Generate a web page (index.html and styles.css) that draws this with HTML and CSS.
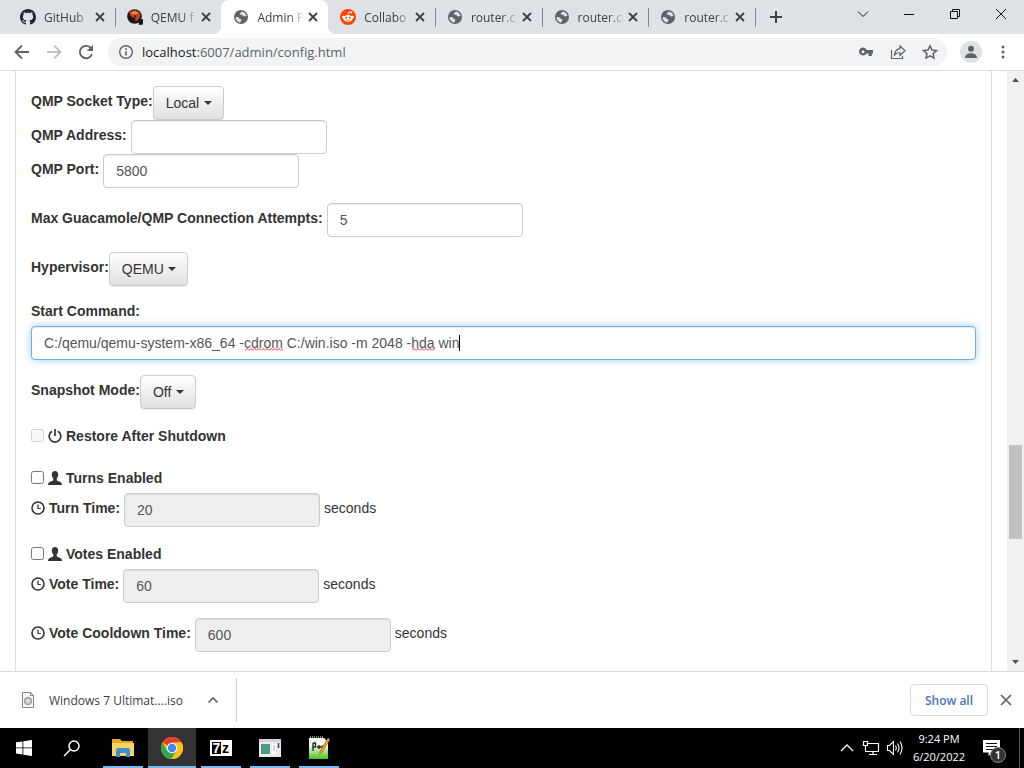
FILE: index.html
```html
<!DOCTYPE html>
<html lang="en">
  <head>
    <title>Admin Panel</title>
    <meta charset="utf-8" />
    <meta name="viewport" content="width=device-width, initial-scale=1" />
    <link rel="stylesheet" href="styles.css">
  </head>
  <body>
    <!-- shared icons -->
    <svg class="defs" aria-hidden="true">
      <symbol id="globe" viewBox="0 0 16 16">
        <circle cx="8" cy="8" r="7" fill="#5f6368"/>
        <path d="M2.600 8.200c1.700-.3 3 .1 3.700 1.100.6.8 1.800.6 2.100 1.500.2.8-.7 1.200-.9 2.700C4.600 13.300 2.500 11 2.600 8.200zM8.600 2.500c-.3 1.300-1.900 1.200-1.900 2.300 0 1 1.300.9 2.300.9.8 0 .6 1.300 1.600 1.600 1.100.3 1.800-.4 2.900-.1C13.200 4.700 11.300 2.700 8.600 2.500z" fill="#dee1e6"/>
      </symbol>
      <symbol id="cross" viewBox="0 0 16 16">
        <path d="M4 4l8 8M12 4l-8 8" stroke="#3c4043" stroke-width="1.800" fill="none"/>
      </symbol>
      <symbol id="clock" viewBox="0 0 14 14">
        <circle cx="7" cy="7" r="6" fill="none" stroke="#333" stroke-width="1.600"/>
        <path d="M7 3.500v4h2.800" fill="none" stroke="#333" stroke-width="1.200"/>
      </symbol>
      <symbol id="user" viewBox="0 0 14 14">
        <path d="M7 0c2 0 3.200 1.400 3.200 3.500 0 1.700-.6 3.200-1.500 4v1.300c0 .8.900 1 2.400 1.600 1.600.6 2.700 1.100 2.900 3.600H0c.2-2.500 1.300-3 2.900-3.600 1.500-.6 2.400-.8 2.400-1.600V7.500c-.9-.8-1.500-2.300-1.500-4C3.800 1.400 5 0 7 0z" fill="#333"/>
      </symbol>
    </svg>

    <header>
      <div class="titlebar">
        <nav class="tabs">
          <div class="tab">
            <svg class="icon16" viewBox="0 0 16 16"><path fill="#24292f" d="M8 0C3.580 0 0 3.580 0 8c0 3.540 2.290 6.530 5.470 7.590.4.070.55-.17.55-.38 0-.19-.01-.82-.01-1.490-2.010.37-2.530-.49-2.690-.94-.09-.23-.48-.94-.82-1.130-.28-.15-.68-.52-.01-.53.63-.01 1.080.58 1.230.82.72 1.210 1.870.87 2.330.66.07-.52.28-.87.51-1.070-1.780-.2-3.640-.89-3.640-3.950 0-.87.31-1.590.82-2.150-.08-.2-.36-1.020.08-2.120 0 0 .67-.21 2.200.82.64-.18 1.320-.27 2-.27s1.360.09 2 .27c1.530-1.040 2.200-.82 2.200-.82.44 1.100.16 1.920.08 2.120.51.56.82 1.270.82 2.150 0 3.070-1.870 3.750-3.650 3.950.29.25.54.73.54 1.480 0 1.070-.01 1.930-.01 2.200 0 .21.15.46.55.38A8.010 8.010 0 0016 8c0-4.420-3.580-8-8-8z"/></svg>
            <span class="tab-title">GitHub</span>
            <button class="tab-close" aria-label="Close tab"><svg class="icon16"><use href="#cross"/></svg></button>
          </div>
          <div class="tab before-active">
            <svg class="icon16" viewBox="0 0 16 16">
              <circle cx="7.500" cy="7.500" r="7.300" fill="#1d1512"/>
              <path d="M11 11l5-1v5.500l-4 .5z" fill="#1d1512"/>
              <path d="M2.500 3.500C5 .5 10 .5 12.500 3.500c1.500 2 1 4.500-.5 6L9 12.500 7.500 9 3.500 7z" fill="#c6471f"/>
              <path d="M4 4c2-2 5-2 7 0L8 6z" fill="#f08a4b"/>
              <path d="M7.500 5.500l2 1-1 3.500-1.500-2.500z" fill="#5a2412"/>
            </svg>
            <span class="tab-title">QEMU f</span>
            <button class="tab-close" aria-label="Close tab"><svg class="icon16"><use href="#cross"/></svg></button>
          </div>
          <div class="tab active">
            <svg class="icon16"><use href="#globe"/></svg>
            <span class="tab-title">Admin P</span>
            <button class="tab-close" aria-label="Close tab"><svg class="icon16"><use href="#cross"/></svg></button>
          </div>
          <div class="tab">
            <svg class="icon16" viewBox="0 0 16 16">
              <circle cx="8" cy="8" r="8" fill="#ff4500"/>
              <ellipse cx="8" cy="9.300" rx="4.800" ry="3.400" fill="#fff"/>
              <circle cx="3.300" cy="8" r="1.300" fill="#fff"/><circle cx="12.700" cy="8" r="1.300" fill="#fff"/>
              <circle cx="11.300" cy="3.500" r="1" fill="#fff"/>
              <path d="M8 6l.7-3 2.600.5" stroke="#fff" stroke-width=".8" fill="none"/>
              <circle cx="6.100" cy="8.700" r="1" fill="#ff4500"/><circle cx="9.900" cy="8.700" r="1" fill="#ff4500"/>
              <path d="M6 10.800c1.200.8 2.800.8 4 0" stroke="#ff4500" stroke-width=".7" fill="none"/>
            </svg>
            <span class="tab-title">Collabo</span>
            <button class="tab-close" aria-label="Close tab"><svg class="icon16"><use href="#cross"/></svg></button>
          </div>
          <div class="tab">
            <svg class="icon16"><use href="#globe"/></svg>
            <span class="tab-title">router.c</span>
            <button class="tab-close" aria-label="Close tab"><svg class="icon16"><use href="#cross"/></svg></button>
          </div>
          <div class="tab">
            <svg class="icon16"><use href="#globe"/></svg>
            <span class="tab-title">router.c</span>
            <button class="tab-close" aria-label="Close tab"><svg class="icon16"><use href="#cross"/></svg></button>
          </div>
          <div class="tab">
            <svg class="icon16"><use href="#globe"/></svg>
            <span class="tab-title">router.c</span>
            <button class="tab-close" aria-label="Close tab"><svg class="icon16"><use href="#cross"/></svg></button>
          </div>
        </nav>
        <button class="new-tab" aria-label="New tab"><svg class="icon16" viewBox="0 0 16 16"><path d="M8 2v12M2 8h12" stroke="#3c4043" stroke-width="2"/></svg></button>
        <div class="window-buttons">
          <button aria-label="Search tabs"><svg width="12" height="12" viewBox="0 0 12 12"><path d="M1 3.500l5 5 5-5"/></svg></button>
          <button aria-label="Minimize"><svg width="12" height="12" viewBox="0 0 12 12"><path d="M1 6.500h10"/></svg></button>
          <button aria-label="Restore"><svg width="12" height="12" viewBox="0 0 12 12"><path d="M1.500 3.500h7v7h-7zM3.500 3.500v-2h7v7h-2"/></svg></button>
          <button aria-label="Close"><svg width="12" height="12" viewBox="0 0 12 12"><path d="M1 1l10 10M11 1L1 11"/></svg></button>
        </div>
      </div>

      <div class="toolbar">
        <button class="nav-button" aria-label="Back"><svg class="icon16" viewBox="0 0 16 16"><path d="M15 8H2M8 1.500L1.500 8 8 14.500" fill="none" stroke="#5f6368" stroke-width="1.800"/></svg></button>
        <button class="nav-button" aria-label="Forward"><svg class="icon16" viewBox="0 0 16 16"><path d="M1 8h13M8 1.500L14.500 8 8 14.500" fill="none" stroke="#bdc1c6" stroke-width="1.800"/></svg></button>
        <button class="nav-button" aria-label="Reload"><svg class="icon16" viewBox="0 0 16 16"><path d="M13 4.200A6.200 6.200 0 1 0 14 10" fill="none" stroke="#5f6368" stroke-width="1.900"/><path d="M15 .8v6.200H8.800z" fill="#5f6368"/></svg></button>
        <div class="address">
          <svg class="icon16" viewBox="0 0 16 16"><circle cx="8" cy="8" r="6.300" fill="none" stroke="#5f6368" stroke-width="1.400"/><path d="M8 7.200v4.300M8 4.300v1.600" stroke="#5f6368" stroke-width="1.600"/></svg>
          <div class="url" aria-label="Address"><span class="host">localhost</span>:6007/admin/config.html</div>
          <button aria-label="Passwords"><svg class="icon16" viewBox="0 0 16 16"><path fill="#5f6368" fill-rule="evenodd" d="M5 3.500c1.700 0 3.100 1 3.700 2.500H15v3.500h-1.200V12h-3.200V9.500H8.500A4 4 0 1 1 5 3.500zm0 2.700a1.500 1.500 0 1 0 0 3 1.500 1.500 0 0 0 0-3z"/></svg></button>
          <button aria-label="Share"><svg class="icon16" viewBox="0 0 16 16"><path d="M1.500 6v8.500h11V12M4.500 11c.5-4 2.500-6 5.500-6.300V2l5 4.800-5 4.700V8.500C7.500 8.500 6 9.300 4.500 11z" fill="none" stroke="#5f6368" stroke-width="1.200"/></svg></button>
          <button aria-label="Bookmark"><svg class="icon16" viewBox="0 0 16 16"><path d="M8 1.800l1.900 4.200 4.600.5-3.400 3.100.9 4.500-4-2.300-4 2.300.9-4.500L1.500 6.500l4.600-.5z" fill="none" stroke="#5f6368" stroke-width="1.500"/></svg></button>
        </div>
        <button class="avatar" aria-label="Profile"><svg class="icon16" viewBox="0 0 16 16"><circle cx="8" cy="4.800" r="3" fill="#5f6368"/><path d="M2 14c0-3 2.500-4.800 6-4.800s6 1.800 6 4.800z" fill="#5f6368"/></svg></button>
        <button class="menu-button" aria-label="Menu"><svg class="icon16" viewBox="0 0 16 16" fill="#5f6368"><circle cx="8" cy="3" r="1.500"/><circle cx="8" cy="8" r="1.500"/><circle cx="8" cy="13" r="1.500"/></svg></button>
      </div>
    </header>

    <div class="viewport">
      <main>
        <form class="panel">
          <div class="row tight">
            <label for="qmp-socket-type">QMP Socket Type:</label>
            <select class="btn" id="qmp-socket-type"><option>Local</option></select>
          </div>
          <div class="row">
            <label for="qmp-address">QMP Address:</label>
            <input type="text" class="form-control" id="qmp-address">
          </div>
          <div class="row">
            <label for="qmp-port">QMP Port:</label>
            <input type="text" class="form-control" id="qmp-port" value="5800">
          </div>
          <div class="row spaced">
            <label for="max-attempts">Max Guacamole/QMP Connection Attempts:</label>
            <input type="text" class="form-control" id="max-attempts" value="5">
          </div>
          <div class="row tight spaced">
            <label for="hypervisor">Hypervisor:</label>
            <select class="btn" id="hypervisor"><option>QEMU</option></select>
          </div>
          <div class="command spaced">
            <label for="start-command">Start Command:</label>
            <div class="command-box">
              <input type="text" class="form-control focused" id="start-command" spellcheck="false" value="C:/qemu/qemu-system-x86_64 -cdrom C:/win.iso -m 2048 -hda win">
              <span class="misspelled cdrom"></span>
              <span class="misspelled hda"></span>
              <span class="text-cursor"></span>
            </div>
          </div>
          <div class="row tight spaced">
            <label for="snapshot-mode">Snapshot Mode:</label>
            <select class="btn" id="snapshot-mode"><option>Off</option></select>
          </div>
          <div class="check spaced">
            <input type="checkbox" id="restore" disabled>
            <label for="restore"><svg class="icon14" viewBox="0 0 14 14"><path d="M4 2.300a5.800 5.800 0 1 0 6 0M7 0v7" fill="none" stroke="#333" stroke-width="1.700"/></svg>Restore After Shutdown</label>
          </div>
          <div class="check spaced">
            <input type="checkbox" id="turns-enabled">
            <label for="turns-enabled"><svg class="icon14"><use href="#user"/></svg>Turns Enabled</label>
          </div>
          <div class="row">
            <label for="turn-time"><svg class="icon14"><use href="#clock"/></svg>Turn Time:</label>
            <input type="text" class="form-control" id="turn-time" value="20" disabled>
            <span class="unit">seconds</span>
          </div>
          <div class="check spaced">
            <input type="checkbox" id="votes-enabled">
            <label for="votes-enabled"><svg class="icon14"><use href="#user"/></svg>Votes Enabled</label>
          </div>
          <div class="row">
            <label for="vote-time"><svg class="icon14"><use href="#clock"/></svg>Vote Time:</label>
            <input type="text" class="form-control" id="vote-time" value="60" disabled>
            <span class="unit">seconds</span>
          </div>
          <div class="row spaced">
            <label for="vote-cooldown"><svg class="icon14"><use href="#clock"/></svg>Vote Cooldown Time:</label>
            <input type="text" class="form-control" id="vote-cooldown" value="600" disabled>
            <span class="unit">seconds</span>
          </div>
        </form>
      </main>
      <div class="scrollbar">
        <svg width="17" height="17" viewBox="0 0 17 17"><path d="M5 11l3.500-4 3.500 4z" fill="#505050"/></svg>
        <div class="track-above"></div>
        <div class="thumb"></div>
        <div class="track-below"></div>
        <svg width="17" height="17" viewBox="0 0 17 17"><path d="M5 6l3.500 4L12 6z" fill="#505050"/></svg>
      </div>
    </div>

    <div class="downloads">
      <div class="download-item">
        <svg width="14" height="18" viewBox="0 0 14 18"><path d="M1.500 1.500h8l3 3v12h-11z" fill="#f4f4f4" stroke="#8a8a8a"/><path d="M9.500 1.500v3h3" fill="none" stroke="#8a8a8a"/><circle cx="7" cy="10" r="3.800" fill="#c4c4c4" stroke="#8a8a8a" stroke-width=".8"/><circle cx="7" cy="10" r="1.200" fill="#f4f4f4"/></svg>
        <span class="file-name">Windows 7 Ultimat....iso</span>
        <button aria-label="Download options"><svg width="12" height="12" viewBox="0 0 12 12"><path d="M1.500 8.500L6 4l4.500 4.500" fill="none" stroke="#5f6368" stroke-width="1.700"/></svg></button>
      </div>
      <button class="show-all">Show all</button>
      <button class="close-downloads" aria-label="Close downloads"><svg width="12" height="12" viewBox="0 0 12 12"><path d="M1 1l10 10M11 1L1 11" stroke="#5f6368" stroke-width="1.700"/></svg></button>
    </div>

    <footer class="taskbar">
      <button aria-label="Start"><svg width="16" height="16" viewBox="0 0 16 16"><path d="M0 2.300L6.500 1.400v6.100H0zM7.300 1.300L16 0v7.500H7.300zM0 8.300h6.500v6.200L0 13.600zM7.300 8.300H16V16l-8.700-1.300z" fill="#fff"/></svg></button>
      <button aria-label="Search"><svg width="18" height="18" viewBox="0 0 18 18"><circle cx="11" cy="7" r="5" fill="none" stroke="#fff" stroke-width="1.500"/><path d="M7.500 10.500L1 17" stroke="#fff" stroke-width="1.500"/></svg></button>
      <div class="apps">
        <button class="running" aria-label="File Explorer"><svg width="22" height="20" viewBox="0 0 22 20"><path d="M0 1h8l2 2h11v14H0z" fill="#e8a825"/><path d="M0 5h22v13H0z" fill="#fcd462"/><path d="M4 19v-7q0-2 2-2h10q2 0 2 2v7h-4v-4H8v4z" fill="#3f8fd2"/></svg></button>
        <button class="running current" aria-label="Chrome"><svg width="24" height="24" viewBox="0 0 24 24"><circle cx="12" cy="12" r="11" fill="#fbc116"/><path d="M12 12L2.500 6.500A11 11 0 0 1 21.500 6.500H12z" fill="#e33b2e"/><path d="M2.500 6.500A11 11 0 0 0 11.500 23l5-8.500L12 12l-4.800 2.700z" fill="#2da94f"/><path d="M21.500 6.500H12v5.500l4.500 2.500-5 8.500A11 11 0 0 0 21.500 6.500z" fill="#fbc116"/><circle cx="12" cy="12" r="5.200" fill="#fff"/><circle cx="12" cy="12" r="4.200" fill="#4285f4"/></svg></button>
        <button class="running" aria-label="7-Zip"><span class="seven-zip"><b>7</b><i>z</i></span></button>
        <button class="running" aria-label="Server console"><svg width="22" height="19" viewBox="0 0 22 19"><path d="M0 0h22v18H0z" fill="#e9ecec"/><path d="M0 0h22v3H0z" fill="#cfd4d4"/><path d="M2 5h9v10H2z" fill="#4c9a83"/><path d="M13 5h4v10h-4z" fill="#fff"/><path d="M14 7h2M14 9h2M14 11h2" stroke="#9aa"/><path d="M19.500 4v5" stroke="#345" stroke-width="1.500"/></svg></button>
        <button class="running" aria-label="Notepad++"><svg width="22" height="24" viewBox="0 0 22 24"><defs><linearGradient id="npp" x2="0" y2="1"><stop offset=".35" stop-color="#f2faea"/><stop offset="1" stop-color="#4fc21b"/></linearGradient></defs><path d="M1 2h15l4 4v17H1z" fill="url(#npp)"/><path d="M2 1h14" stroke="#bbb" stroke-width="1.500" stroke-dasharray="1 1"/><path d="M5 7v8M5 7h2.500v4H5M9 11h4M11 9v4M13 11h4M15 9v4" stroke="#222" stroke-width="1.300" fill="none"/><path d="M20 2l2 1.500-8 13-2.500 2 .5-3.500z" fill="#f0a020" stroke="#8a5a10" stroke-width=".5"/></svg></button>
      </div>
      <div class="tray">
        <button aria-label="Hidden icons"><svg width="14" height="14" viewBox="0 0 14 14"><path d="M1 10l6-6 6 6" fill="none" stroke="#fff" stroke-width="1.300"/></svg></button>
        <button aria-label="Network"><svg width="18" height="16" viewBox="0 0 18 16"><path d="M5.500 3.500h11v8h-11M11 11.500v3M7 14.500h8M1.500 1.500h4v4h-4zM3.500 5.500v6h2" fill="none" stroke="#fff" stroke-width="1.200"/></svg></button>
        <button aria-label="Volume"><svg width="18" height="16" viewBox="0 0 18 16"><path d="M1.500 5.500h2l4-4v13l-4-4h-2zM9.500 5.500q1.500 2.500 0 5M11.500 3.500q3 4.500 0 9M14 1.500q4 6.500 0 13" fill="none" stroke="#fff" stroke-width="1.100"/></svg></button>
      </div>
      <div class="clock">
        <span>9:24 PM</span>
        <span>6/20/2022</span>
      </div>
      <button class="notifications" aria-label="Notifications"><svg width="17" height="17" viewBox="0 0 17 17"><path d="M0 0h17v12.500H9L5.500 16v-3.500H0z" fill="#fff"/><path d="M3 3.500h11M3 6.500h11M3 9.500h8" stroke="#111"/></svg><span class="badge">1</span></button>
      <div class="show-desktop"></div>
    </footer>
  </body>
</html>
```

FILE: styles.css
```css
* {
  box-sizing: border-box;
}

body {
  margin: 0;
  min-height: 100vh;
  display: flex;
  flex-direction: column;
  font-family: "Open Sans", "Noto Sans", sans-serif;
  font-size: 12px;
  color: #3c4043;
  background-color: #fff;
}

button {
  border: 0;
  padding: 0;
  background: none;
  font-family: inherit;
  color: inherit;
  display: flex;
  align-items: center;
  justify-content: center;
}

svg {
  display: block;
  flex: none;
}

.defs {
  position: absolute;
  width: 0;
  height: 0;
}

.icon16 {
  width: 16px;
  height: 16px;
}

.icon14 {
  width: 14px;
  height: 14px;
}

/* tab strip */
.titlebar {
  display: flex;
  height: 34px;
  padding-left: 8px;
  background-color: #dee1e6;
}

.tabs {
  display: flex;
  flex: 0 1 747px;
  min-width: 0;
}

.tab {
  flex: 1;
  min-width: 0;
  display: flex;
  align-items: center;
  padding: 0 7px 0 12px;
  position: relative;
}

.tab::after {
  content: "";
  position: absolute;
  right: -1px;
  top: 8px;
  height: 19px;
  width: 1px;
  background-color: #80868b;
}

.tab.before-active::after {
  display: none;
}

.tab.active {
  background-color: #fff;
  border-radius: 8px 8px 0 0;
}

.tab.active::before,
.tab.active::after {
  content: "";
  position: absolute;
  top: auto;
  bottom: 0;
  width: 8px;
  height: 8px;
}

.tab.active::before {
  left: -8px;
  background: radial-gradient(circle at 0 0, transparent 8px, #fff 8px);
}

.tab.active::after {
  right: -8px;
  background: radial-gradient(circle at 100% 0, transparent 8px, #fff 8px);
}

.tab-title {
  flex: 1;
  min-width: 0;
  padding-left: 8px;
  white-space: nowrap;
  -webkit-mask-image: linear-gradient(90deg, #000 70%, transparent);
  mask-image: linear-gradient(90deg, #000 70%, transparent);
}

.new-tab {
  width: 42px;
}

.window-buttons {
  display: flex;
  height: 28px;
  margin-left: auto;
}

.window-buttons button {
  width: 46px;
}

.window-buttons path {
  fill: none;
  stroke: #111;
}

/* address row */
.toolbar {
  display: flex;
  align-items: center;
  height: 37px;
  padding: 0 13px 0 6px;
  border-bottom: 1px solid #dadce0;
}

.nav-button {
  width: 32px;
  height: 32px;
}

.address {
  flex: 1;
  display: flex;
  align-items: center;
  gap: 8px;
  height: 28px;
  margin-left: 6px;
  padding: 0 5px 0 10px;
  border-radius: 14px;
  background-color: #f1f3f4;
}

.address button {
  width: 24px;
}

.url {
  flex: 1;
  font-size: 13px;
  color: #5f6368;
}

.host {
  color: #202124;
}

.avatar {
  width: 22px;
  height: 22px;
  margin: 0 13px;
  border-radius: 50%;
  background-color: #dee1e6;
}

/* page */
.viewport {
  flex: 1;
  display: flex;
}

main {
  flex: 1;
  padding: 0 15px;
  font-family: "Liberation Sans", Arial, sans-serif;
  font-size: 14px;
  line-height: 20px;
  color: #333;
}

.panel {
  display: flex;
  flex-direction: column;
  height: 100%;
  padding: 15px;
  border: solid #ddd;
  border-width: 0 1px;
}

.panel label {
  font-weight: bold;
  display: flex;
  align-items: center;
  gap: 4px;
}

.row {
  display: flex;
  align-items: center;
  gap: 4px;
}

.row label,
.unit {
  padding-bottom: 4px;
}

.tight {
  gap: 0;
}

.spaced {
  margin-top: 15px;
}

.btn {
  appearance: none;
  height: 34px;
  padding: 0 23px 0 12px;
  border: 1px solid #ccc;
  border-radius: 4px;
  background: url("data:image/svg+xml,%3Csvg xmlns='http://www.w3.org/2000/svg' width='8' height='4'%3E%3Cpath d='M0 0h8L4 4z' fill='%23333'/%3E%3C/svg%3E") no-repeat right 11px center, linear-gradient(#fff, #e0e0e0);
  box-shadow: 0 1px 1px rgba(0, 0, 0, 0.08);
  font: inherit;
  color: #333;
}

.form-control {
  width: 196px;
  height: 34px;
  padding: 6px 12px;
  border: 1px solid #ccc;
  border-radius: 4px;
  background-color: #fff;
  box-shadow: inset 0 1px 1px rgba(0, 0, 0, 0.08);
  font: inherit;
  color: #555;
}

.form-control:disabled {
  background-color: #eee;
}

.form-control.focused {
  display: block;
  width: 100%;
  border-color: #66afe9;
  box-shadow: inset 0 1px 1px rgba(0, 0, 0, 0.08), 0 0 8px rgba(102, 175, 233, 0.6);
}

.command label {
  margin-bottom: 5px;
}

.command-box {
  position: relative;
}

/* spell check marks over the command */
.misspelled {
  position: absolute;
  top: 22px;
  height: 3px;
  background: url("data:image/svg+xml,%3Csvg xmlns='http://www.w3.org/2000/svg' width='4' height='3'%3E%3Cpath d='M0 2.500L2 .5l2 2' fill='none' stroke='%23e03030'/%3E%3C/svg%3E") repeat-x;
}

.cdrom {
  left: 214px;
  width: 38px;
}

.hda {
  left: 381px;
  width: 23px;
}

.text-cursor {
  position: absolute;
  left: 428px;
  top: 9px;
  width: 1px;
  height: 16px;
  background-color: #000;
}

.check {
  display: flex;
  align-items: center;
  gap: 4px;
  height: 22px;
  margin-bottom: 5px;
}

.check label {
  padding-top: 2px;
}

.check input {
  width: 13px;
  height: 13px;
  margin: 0;
}

.scrollbar {
  width: 17px;
  display: flex;
  flex-direction: column;
  background-color: #f1f1f1;
}

.track-above {
  flex: 357;
}

.thumb {
  flex: 94;
  margin: 0 2px;
  background-color: #c1c1c1;
}

.track-below {
  flex: 115;
}

/* downloads bar */
.downloads {
  display: flex;
  align-items: center;
  height: 57px;
  padding-right: 12px;
  border-top: 1px solid #dadce0;
}

.download-item {
  display: flex;
  align-items: center;
  height: 44px;
  padding: 0 17px 0 21px;
  border-right: 1px solid #c8cacd;
}

.file-name {
  margin: 0 24px 0 14px;
}

.show-all {
  width: 78px;
  height: 32px;
  margin: 0 12px 0 auto;
  border: 1px solid #dadce0;
  border-radius: 4px;
  font-size: 12px;
  font-weight: 600;
  color: #4a72bd;
}

/* taskbar */
.taskbar {
  display: flex;
  height: 40px;
  background-color: #000;
  color: #fff;
}

.taskbar > button,
.apps button {
  width: 48px;
}

.apps {
  display: flex;
  gap: 1px;
  margin-left: 3px;
}

.running {
  position: relative;
}

.running::after {
  content: "";
  position: absolute;
  left: 4px;
  right: 4px;
  bottom: 0;
  height: 2px;
  background-color: #76b9ed;
}

.current {
  background-color: #333;
}

.current::after {
  left: 0;
  right: 0;
}

.seven-zip {
  display: flex;
  width: 22px;
  height: 16px;
  border: 2px solid #fff;
  background-color: #fff;
  font-family: "Liberation Sans", Arial, sans-serif;
  font-weight: bold;
  font-size: 14px;
  line-height: 12px;
}

.seven-zip b {
  flex: 1;
  background-color: #000;
  color: #fff;
}

.seven-zip i {
  flex: 1;
  font-style: normal;
  color: #000;
}

.tray {
  display: flex;
  margin-left: auto;
}

.tray button {
  width: 24px;
}

.clock {
  display: flex;
  flex-direction: column;
  align-items: center;
  justify-content: center;
  width: 64px;
  font-size: 11px;
  line-height: 18px;
}

.taskbar > .notifications {
  position: relative;
  width: 40px;
}

.badge {
  position: absolute;
  left: 19px;
  top: 19px;
  width: 16px;
  height: 16px;
  border: 1px solid #888;
  border-radius: 50%;
  background-color: #333;
  font-size: 11px;
  font-weight: 600;
  line-height: 14px;
}

.show-desktop {
  width: 5px;
  margin-left: 8px;
  border-left: 1px solid #555;
}
```
